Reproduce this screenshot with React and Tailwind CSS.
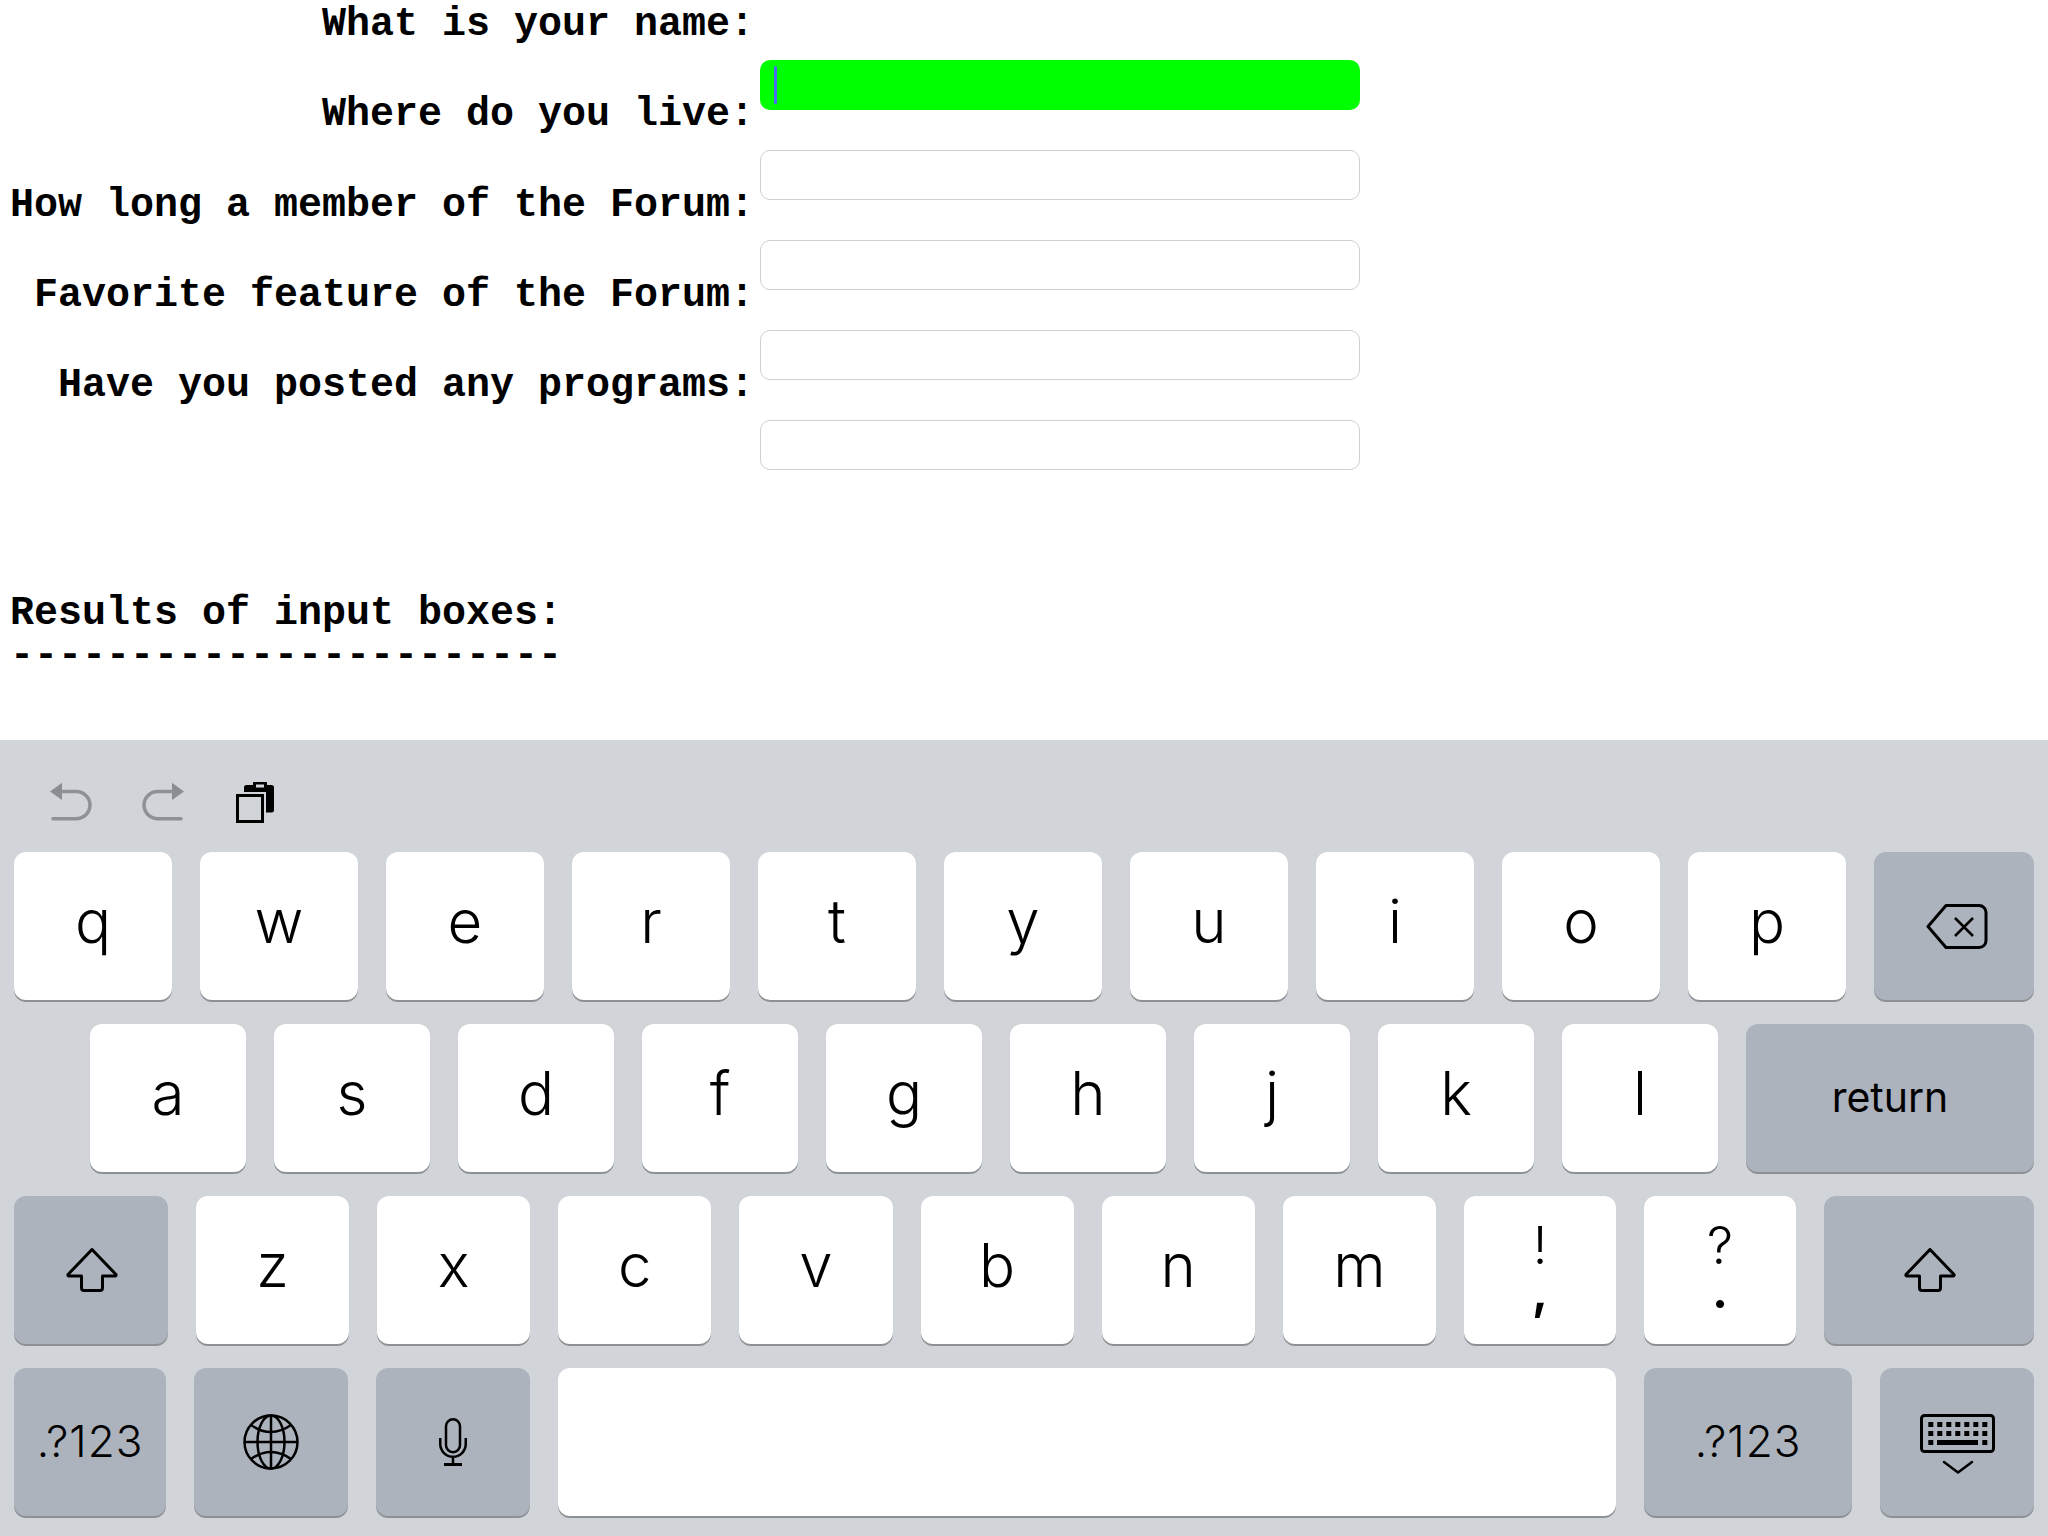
import React from 'react'

const labels = [
  'What is your name:',
  'Where do you live:',
  'How long a member of the Forum:',
  'Favorite feature of the Forum:',
  'Have you posted any programs:',
]

const rowOne = ['q', 'w', 'e', 'r', 't', 'y', 'u', 'i', 'o', 'p']
const rowTwo = ['a', 's', 'd', 'f', 'g', 'h', 'j', 'k', 'l']
const rowThree = ['z', 'x', 'c', 'v', 'b', 'n', 'm']

function Key({ className = '', dark, children }) {
  return (
    <div
      className={`h-[148px] rounded-[12px] flex items-center justify-center text-black font-['Inter',sans-serif] shadow-[0_2px_0_#8e9094] ${dark ? 'bg-[#acb3bd]' : 'bg-white'} ${className}`}
    >
      {children}
    </div>
  )
}

function Letter({ children }) {
  return <Key className="flex-1 text-[60px] font-light leading-none pb-[11px]">{children}</Key>
}

function Undo() {
  return (
    <svg width="44" height="40" viewBox="0 0 44 40" fill="none">
      <path d="M1 9.5L13 0.7V18Z" fill="#8a8d92" />
      <path d="M13 9.5H27a14 13.6 0 0 1 0 27.2H4" stroke="#8e9195" strokeWidth="3.5" strokeLinecap="round" />
    </svg>
  )
}

function Redo() {
  return (
    <svg width="44" height="40" viewBox="0 0 44 40" fill="none">
      <path d="M43 9.5L31 0.7V18Z" fill="#8a8d92" />
      <path d="M31 9.5H17a14 13.6 0 0 0 0 27.2H40" stroke="#8e9195" strokeWidth="3.5" strokeLinecap="round" />
    </svg>
  )
}

function Paste() {
  return (
    <svg width="39" height="41" viewBox="0 0 39 41" fill="none">
      <path d="M8 10V5.5A2.5 2.5 0 0 1 10.5 3H35.5A2.5 2.5 0 0 1 38 5.5V28a2.5 2.5 0 0 1-2.5 2.5H30V10Z" fill="#000" />
      <rect x="17" y="0" width="14" height="8" fill="#000" />
      <rect x="20" y="2.5" width="8" height="3" fill="#d1d5da" />
      <rect x="1.5" y="13.5" width="25" height="26" stroke="#000" strokeWidth="3" fill="#d1d5da" />
    </svg>
  )
}

function Backspace() {
  return (
    <svg width="62" height="45" viewBox="0 0 62 45" fill="none" stroke="#000" className="ml-[5px]">
      <path d="M2 22.5L20 1.5H53a7 7 0 0 1 7 7v28a7 7 0 0 1-7 7H20Z" strokeWidth="3" strokeLinejoin="round" />
      <path d="M29 14L47 32M47 14L29 32" strokeWidth="2.5" />
    </svg>
  )
}

function Shift() {
  return (
    <svg width="52" height="44" viewBox="0 0 52 44" fill="none" stroke="#000" className="ml-[2px]">
      <path
        d="M26 1.5L50 26.5a1 1 0 0 1-.7 1.5H36.5V40a2.5 2.5 0 0 1-2.5 2.5H18a2.5 2.5 0 0 1-2.5-2.5V28H2.7a1 1 0 0 1-.7-1.5Z"
        strokeWidth="3"
        strokeLinejoin="round"
      />
    </svg>
  )
}

function Globe() {
  return (
    <svg width="56" height="56" viewBox="0 0 56 56" fill="none" stroke="#000" strokeWidth="2.5">
      <circle cx="28" cy="28" r="26.5" />
      <ellipse cx="28" cy="28" rx="13.5" ry="26.5" />
      <path d="M28 1.5V54.5M1.5 28H54.5" />
      <path d="M8 11Q28 25 48 11M8 45Q28 31 48 45" />
    </svg>
  )
}

function Mic() {
  return (
    <svg width="28" height="48" viewBox="0 0 28 48" fill="none" stroke="#000" strokeWidth="2.5">
      <rect x="7" y="1.25" width="14" height="33" rx="7" />
      <path d="M1.25 20v6a12.75 12.75 0 0 0 25.5 0v-6M14 39V46" />
      <path d="M5 46.5H23" strokeWidth="3" />
    </svg>
  )
}

function KeyboardHide() {
  const cols = [0, 1, 2, 3, 4, 5, 6]
  return (
    <svg width="75" height="60" viewBox="0 0 75 60" fill="none" className="mt-[3px]">
      <rect x="1.5" y="1.5" width="72" height="36" rx="3" stroke="#000" strokeWidth="3" />
      {cols.map((c) => (
        <rect key={`a${c}`} x={8.3 + 9 * c} y="8" width="5" height="5" fill="#000" />
      ))}
      {cols.map((c) => (
        <rect key={`b${c}`} x={8.3 + 9 * c} y="17" width="5" height="5" fill="#000" />
      ))}
      <rect x="8.3" y="26" width="5" height="5" fill="#000" />
      <rect x="17" y="26" width="41" height="5" fill="#000" />
      <rect x="62.3" y="26" width="5" height="5" fill="#000" />
      <path d="M24 48L38 58.5L52 48" stroke="#000" strokeWidth="2.5" strokeLinecap="round" strokeLinejoin="round" />
    </svg>
  )
}

export default function App() {
  return (
    <div className="w-[2048px] h-[1536px] bg-white overflow-hidden">
      <div className="h-[740px] font-['Liberation_Mono',monospace] font-bold text-[40px] text-black">
        <div className="flex gap-[6px]">
          <div className="w-[754px] pt-[3px] flex flex-col gap-[46.3px] items-end">
            {labels.map((l) => (
              <div key={l} className="leading-[44px] whitespace-pre">{l}</div>
            ))}
          </div>
          <div className="w-[600px] pt-[60px] flex flex-col gap-[40px]">
            <div className="h-[50px] rounded-[10px] bg-[#00ff00] flex items-center pl-[14px]">
              <div className="w-[3px] h-[38px] rounded-full bg-[#4a6cf7]" />
            </div>
            {[0, 1, 2, 3].map((i) => (
              <input key={i} readOnly className="h-[50px] rounded-[10px] border border-[#d0d0d0] bg-white outline-none" />
            ))}
          </div>
        </div>
        <div className="mt-[123px] pl-[10px] leading-[42px] whitespace-pre">
          <div>Results of input boxes:</div>
          <div>-----------------------</div>
        </div>
      </div>

      <div className="h-[796px] bg-[#d1d5da] px-[14px]">
        <div className="h-[112px] pl-[35px] pt-[42px] flex items-start gap-[48px]">
          <Undo />
          <Redo />
          <div className="ml-[3px]">
            <Paste />
          </div>
        </div>
        <div className="flex flex-col gap-[24px]">
          <div className="flex gap-[28px]">
            {rowOne.map((k) => (
              <Letter key={k}>{k}</Letter>
            ))}
            <Key dark className="w-[160px]">
              <Backspace />
            </Key>
          </div>
          <div className="flex gap-[28px] pl-[76px]">
            {rowTwo.map((k) => (
              <Letter key={k}>{k}</Letter>
            ))}
            <Key dark className="w-[288px] text-[41px] font-normal">return</Key>
          </div>
          <div className="flex gap-[28px]">
            <Key dark className="w-[154px]">
              <Shift />
            </Key>
            {rowThree.map((k) => (
              <Letter key={k}>{k}</Letter>
            ))}
            <Key className="w-[152px] flex-col text-[52px] font-light leading-[44px] pb-[4px]">
              <span>!</span>
              <span className="font-semibold">,</span>
            </Key>
            <Key className="w-[152px] flex-col text-[52px] font-light leading-[44px] pb-[4px]">
              <span>?</span>
              <span className="font-semibold">.</span>
            </Key>
            <Key dark className="w-[210px]">
              <Shift />
            </Key>
          </div>
          <div className="flex gap-[28px]">
            <Key dark className="w-[152px] text-[44px] font-light tracking-[1px] pb-[2px]">.?123</Key>
            <Key dark className="w-[154px]">
              <Globe />
            </Key>
            <Key dark className="w-[154px]">
              <Mic />
            </Key>
            <Key className="flex-1" />
            <Key dark className="w-[208px] text-[44px] font-light tracking-[1px] pb-[2px]">.?123</Key>
            <Key dark className="w-[154px]">
              <KeyboardHide />
            </Key>
          </div>
        </div>
      </div>
    </div>
  )
}
